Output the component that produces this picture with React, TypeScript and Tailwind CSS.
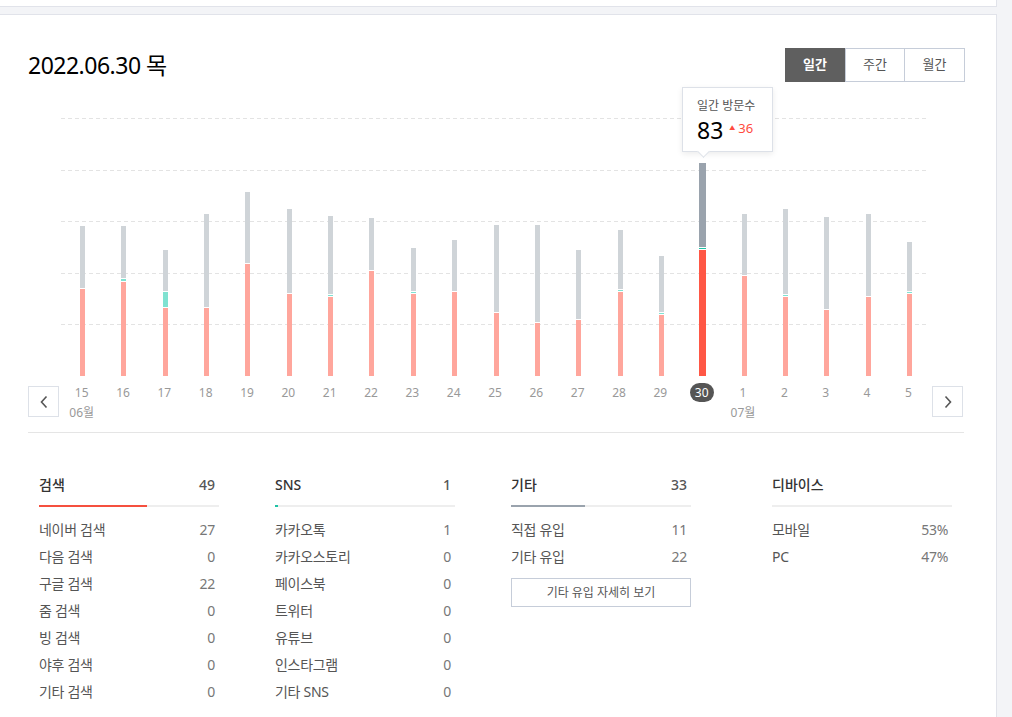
import React from 'react';

type Bar = { d: string; g: number; t: number | null; r: number };

// tops of each segment in page px (baseline 376)
const bars: Bar[] = [
    { d: '15', g: 226, t: null, r: 289 },
    { d: '16', g: 226, t: 279, r: 282 },
    { d: '17', g: 250, t: 292, r: 308 },
    { d: '18', g: 214, t: null, r: 308 },
    { d: '19', g: 192, t: null, r: 264 },
    { d: '20', g: 209, t: null, r: 294 },
    { d: '21', g: 216, t: 295, r: 297 },
    { d: '22', g: 218, t: null, r: 271 },
    { d: '23', g: 248, t: 292, r: 294 },
    { d: '24', g: 240, t: null, r: 292 },
    { d: '25', g: 225, t: null, r: 313 },
    { d: '26', g: 225, t: null, r: 323 },
    { d: '27', g: 250, t: null, r: 320 },
    { d: '28', g: 230, t: 290, r: 292 },
    { d: '29', g: 256, t: 313, r: 315 },
    { d: '30', g: 163, t: 248, r: 250 },
    { d: '1', g: 214, t: null, r: 276 },
    { d: '2', g: 209, t: 295, r: 297 },
    { d: '3', g: 217, t: null, r: 310 },
    { d: '4', g: 214, t: null, r: 297 },
    { d: '5', g: 242, t: 292, r: 294 },
];

const TOP = 82;
const BASE = 376;

const stats = [
    {
        title: '검색', total: '49', fill: 'bg-[#f5503f]', width: 'w-[60%]',
        rows: [['네이버 검색', '27'], ['다음 검색', '0'], ['구글 검색', '22'], ['줌 검색', '0'], ['빙 검색', '0'], ['야후 검색', '0'], ['기타 검색', '0']],
    },
    {
        title: 'SNS', total: '1', fill: 'bg-[#1fc2a5]', width: 'w-[3px]',
        rows: [['카카오톡', '1'], ['카카오스토리', '0'], ['페이스북', '0'], ['트위터', '0'], ['유튜브', '0'], ['인스타그램', '0'], ['기타 SNS', '0']],
    },
    {
        title: '기타', total: '33', fill: 'bg-[#9aa3ad]', width: 'w-[41%]',
        rows: [['직접 유입', '11'], ['기타 유입', '22']],
        more: true,
    },
    {
        title: '디바이스', total: '', fill: '', width: 'w-0',
        rows: [['모바일', '53%'], ['PC', '47%']],
    },
];

const Chevron: React.FC<{ dir: 'left' | 'right' }> = ({ dir }) => (
    <svg width="10" height="14" viewBox="0 0 10 14" fill="none">
        <path
            d={dir === 'left' ? 'M7.5 1.5 L2.5 7 L7.5 12.5' : 'M2.5 1.5 L7.5 7 L2.5 12.5'}
            stroke="#555"
            strokeWidth="1.6"
        />
    </svg>
);

const Chart: React.FC = () => {
    const cx = (i: number) => 54.5 + 41.35 * i;
    return (
        <svg width="936" height={BASE - TOP} className="block" shapeRendering="crispEdges">
            {[118.5, 170, 221.5, 273, 324.5].map((y) => (
                <line key={y} x1="33" x2="900" y1={y - TOP} y2={y - TOP} stroke="#e3e3e3" strokeDasharray="4 3" />
            ))}
            {bars.map((b, i) => {
                const sel = b.d === '30';
                const w = sel ? 7 : 5;
                const x = cx(i) - w / 2;
                const grayEnd = (b.t ?? b.r) - 1;
                return (
                    <g key={b.d}>
                        <rect x={x} y={b.g - TOP} width={w} height={grayEnd - b.g} fill={sel ? '#9aa3ad' : '#cfd4d8'} />
                        {b.t !== null && (
                            <rect x={x} y={b.t - TOP} width={w} height={b.r - 1 - b.t} fill={sel ? '#1fc2a5' : '#80e2d1'} />
                        )}
                        <rect x={x} y={b.r - TOP} width={w} height={BASE - b.r} fill={sel ? '#ff5745' : '#ffa69c'} />
                    </g>
                );
            })}
        </svg>
    );
};

const App: React.FC = () => {
    return (
        <div className="min-h-screen bg-[#f3f4f7] font-['Noto_Sans','Noto_Sans_CJK_KR',sans-serif] text-[#333]">
            <div className="h-[7px] w-[997px] bg-white border-b border-r border-[#e1e3ea]" />
            <div className="mt-[7px] w-[997px] bg-white border-t border-r border-[#e1e3ea] pb-[40px]">
                {/* header */}
                <div className="flex items-center justify-between pl-[28px] pr-[31px] pt-[33px] h-[67px]">
                    <h1 className="text-[23px] tracking-[-0.5px] text-black leading-none">2022.06.30 목</h1>
                    <div className="flex h-[34px] text-[13px]">
                        <button className="w-[60px] bg-[#5f5f5f] text-white font-bold">일간</button>
                        <button className="w-[60px] border border-[#c6cdd9] text-[#555]">주간</button>
                        <button className="w-[60px] border border-l-0 border-[#c6cdd9] text-[#555]">월간</button>
                    </div>
                </div>

                {/* chart */}
                <div className="relative ml-[28px] w-[936px] border-b border-[#e5e5e5]">
                    <Chart />
                    <div className="absolute left-[654px] top-[5px] w-[91px] h-[65px] bg-white border border-[#dde1e8] shadow-[0_2px_6px_rgba(0,0,0,0.08)] pl-[14px] pt-[10px]">
                        <div className="text-[12px] text-[#555] leading-[16px]">일간 방문수</div>
                        <div className="flex items-start mt-[2px]">
                            <span className="text-[23px] leading-[28px] text-black">83</span>
                            <span className="ml-[6px] mt-[4px] flex items-center text-[13px] leading-[16px] text-[#ff4b3e]">
                                <span className="text-[6px] mr-[3px]">▲</span>36
                            </span>
                        </div>
                        <div className="absolute left-[16px] -bottom-[5px] w-[9px] h-[9px] rotate-45 bg-white border-r border-b border-[#dde1e8]" />
                    </div>

                    <div className="flex items-start h-[56px]">
                        <button className="mt-[10px] w-[31px] h-[31px] border border-[#dde1e8] flex items-center justify-center">
                            <Chevron dir="left" />
                        </button>
                        <div className="ml-[2px] w-[868px] grid grid-cols-[repeat(21,minmax(0,1fr))] pt-[7px] text-[12px] text-[#999]">
                            {bars.map((b) => (
                                <div key={b.d} className="flex flex-col items-center">
                                    {b.d === '30' ? (
                                        <span className="h-[19px] px-[5px] rounded-full bg-[#555] text-white leading-[19px]">30</span>
                                    ) : (
                                        <span className="h-[19px] leading-[19px]">{b.d}</span>
                                    )}
                                    <span className="h-[19px] leading-[19px] mt-px">
                                        {b.d === '15' ? '06월' : b.d === '1' ? '07월' : ''}
                                    </span>
                                </div>
                            ))}
                        </div>
                        <button className="ml-[3px] mt-[10px] w-[31px] h-[31px] border border-[#dde1e8] flex items-center justify-center">
                            <Chevron dir="right" />
                        </button>
                    </div>
                </div>

                {/* stats */}
                <div className="flex mt-[41px] pl-[39px] gap-[56px]">
                    {stats.map((s, idx) => (
                        <div key={s.title} className={`w-[180px] ${idx === 3 ? 'ml-[25px]' : ''}`}>
                            <div className="flex items-center justify-between h-[20px] text-[14px]">
                                <span className="font-medium text-[#333]">{s.title}</span>
                                <span className="font-medium text-[#555] pr-[4px]">{s.total}</span>
                            </div>
                            <div className="mt-[11px] h-[2px] bg-[#eeeeee]">
                                <div className={`h-full ${s.fill} ${s.width}`} />
                            </div>
                            <div className="mt-[9px]">
                                {s.rows.map(([k, v]) => (
                                    <div key={k} className="flex items-center justify-between h-[27px] text-[14px] tracking-[-0.3px]">
                                        <span className="text-[#555]">{k}</span>
                                        <span className="text-[#777] pr-[4px]">{v}</span>
                                    </div>
                                ))}
                            </div>
                            {s.more && (
                                <button className="mt-[8px] w-full h-[29px] border border-[#c6cdd9] text-[12px] text-[#555]">
                                    기타 유입 자세히 보기
                                </button>
                            )}
                        </div>
                    ))}
                </div>
            </div>
        </div>
    );
};

export default App;
